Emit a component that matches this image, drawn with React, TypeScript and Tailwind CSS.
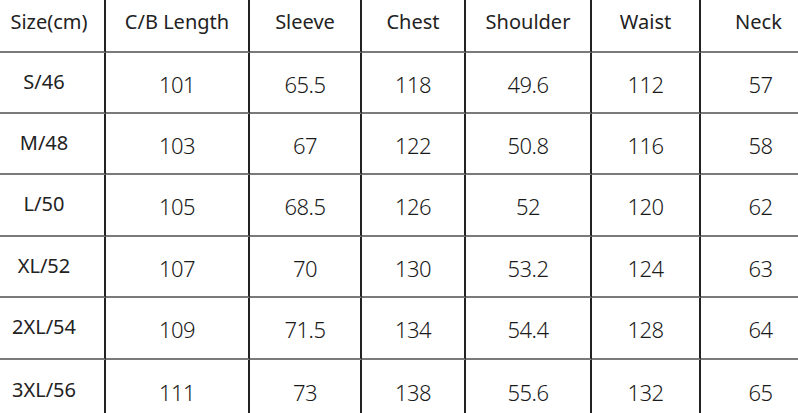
const headers = ['Size(cm)', 'C/B Length', 'Sleeve', 'Chest', 'Shoulder', 'Waist', 'Neck']

const rows = [
  ['S/46', '101', '65.5', '118', '49.6', '112', '57'],
  ['M/48', '103', '67', '122', '50.8', '116', '58'],
  ['L/50', '105', '68.5', '126', '52', '120', '62'],
  ['XL/52', '107', '70', '130', '53.2', '124', '63'],
  ['2XL/54', '109', '71.5', '134', '54.4', '128', '64'],
  ['3XL/56', '111', '73', '138', '55.6', '132', '65'],
]

function cellClass(col: number, row: number) {
  const parts = ['flex items-center justify-center']
  if (col < 6) parts.push('border-r-2 border-r-[#222]')
  if (row < 5) parts.push('border-b-2 border-b-[#7a7a7a]')
  if (col === 0) parts.push(row === -1 ? 'pr-[6px]' : 'pr-[16px]')
  if (col === 6) parts.push(row === -1 ? 'pl-[18px]' : 'pl-[22px]')
  return parts.join(' ')
}

export default function App() {
  return (
    <div
      className="w-[798px] h-[413px] overflow-hidden bg-white text-[#222]"
      style={{ fontFamily: '"Noto Sans", "Open Sans", sans-serif' }}
    >
      {/* last row is cut off by the frame, as in the source image */}
      <div className="grid grid-cols-[106px_144px_112px_104px_126px_109px_97px] grid-rows-[53px_61px_61px_62px_61px_62px_62px]">
        {headers.map((h, i) => (
          <div key={h} className={cellClass(i, -1) + ' pb-[7px] text-[20px]'}>
            {h}
          </div>
        ))}
        {rows.map((r, ri) =>
          r.map((v, ci) => (
            <div
              key={ri + '-' + ci}
              className={
                cellClass(ci, ri) +
                (ci === 0 ? ' pb-[2px] text-[20px]' : ' pt-[3px] text-[22px] font-light tracking-[-0.5px] text-[#1a1a1a]')
              }
            >
              {v}
            </div>
          ))
        )}
      </div>
    </div>
  )
}
